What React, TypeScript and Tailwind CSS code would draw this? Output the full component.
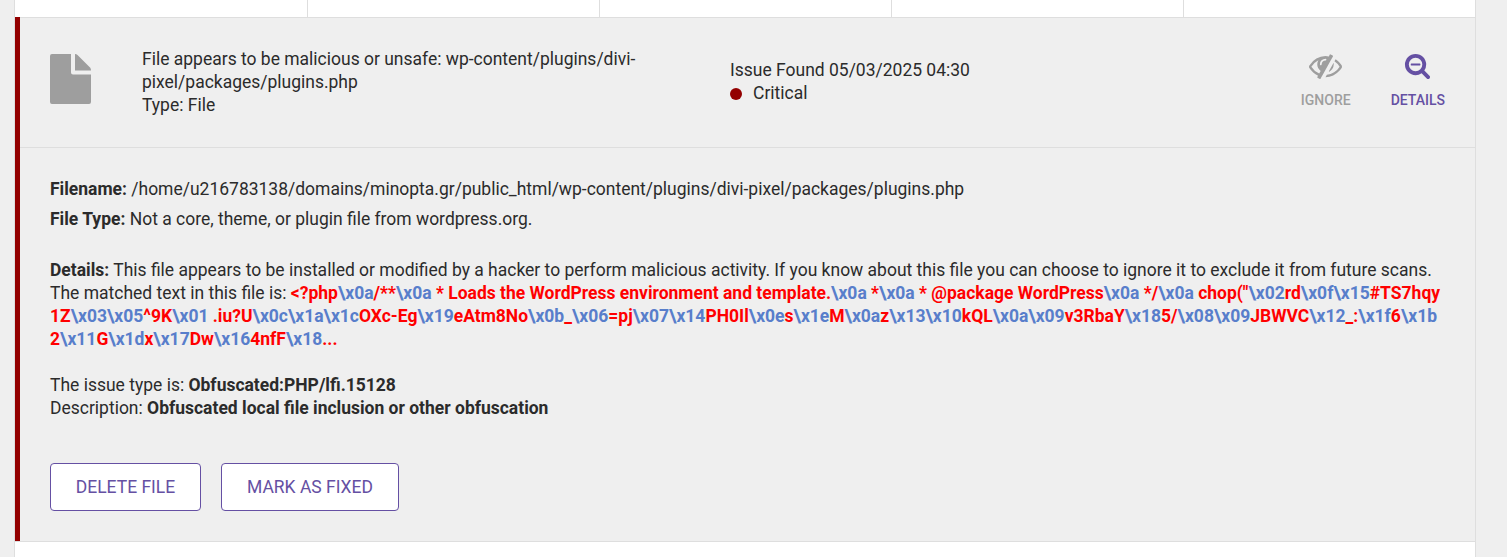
import { Fragment } from 'react';

const MATCHED: string = String.raw`<?php\x0a/**\x0a * Loads the WordPress environment and template.\x0a *\x0a * @package WordPress\x0a */\x0a chop("\x02rd\x0f\x15#TS7hqy1Z\x03\x05^9K\x01 .iu?U\x0c\x1a\x1cOXc-Eg\x19eAtm8No\x0b_\x06=pj\x07\x14PH0Il\x0es\x1eM\x0az\x13\x10kQL\x0a\x09v3RbaY\x185/\x08\x09JBWVC\x12_:\x1f6\x1b2\x11G\x1dx\x17Dw\x164nfF\x18...`;

const LINE_BREAKS = ['#TS7hqy', '6\\x1b'];

function MatchedText() {
  const lines: string[] = [];
  let rest = MATCHED;
  for (const end of LINE_BREAKS) {
    const at = rest.indexOf(end) + end.length;
    lines.push(rest.slice(0, at));
    rest = rest.slice(at);
  }
  lines.push(rest);
  return (
    <strong className="font-bold text-[#ff0000]">
      {lines.map((line, i) => (
        <Fragment key={i}>
          {i > 0 && <br />}
          {line.split(/(\\x[0-9a-f]{2})/).map((part, j) =>
            j % 2 ? <span key={j} className="text-[#587ecb]">{part}</span> : part,
          )}
        </Fragment>
      ))}
    </strong>
  );
}

function FileIcon() {
  return (
    <svg width="41" height="50" viewBox="0 0 41 50" fill="#9e9e9e">
      <path d="M2 0H21V18.500Q21 20.500 23 20.500H41V48Q41 50 39 50H2Q0 50 0 48V2Q0 0 2 0Z" />
      <path d="M25 0Q26.500 0 27.500 1L40 13.500Q41 14.500 41 16.500H25Z" />
    </svg>
  );
}

function EyeSlashIcon() {
  return (
    <svg width="33" height="33" viewBox="0 0 1792 1792" fill="currentColor">
      <path d="M555 1335l78-141q-87-63-136-159t-49-203q0-121 61-225-229 117-381 353 167 258 427 375zm389-759q0-20-14-34t-34-14q-125 0-214.500 89.500t-89.500 214.500q0 20 14 34t34 14 34-14 14-34q0-86 61-147t147-61q20 0 34-14t14-34zm363-191q0 7-1 9-106 189-316 567t-315 566l-49 89q-10 16-28 16-12 0-134-70-16-10-16-28 0-12 44-87-143-65-263.500-173t-208.500-245q-20-31-20-69t20-69q153-235 380-371t496-136q89 0 180 17l54-97q10-16 28-16 5 0 18 6t31 15.500 33 18.500 31.500 18.500 19.500 11.500q16 10 16 27zm37 447q0 139-79 253.500t-209 164.500l280-502q8 45 8 84zm448 128q0 35-20 69-39 64-109 145-150 172-347.500 267t-419.500 95l74-132q212-18 392.500-137t301.500-307q-115-179-282-294l63-112q95 64 182.500 153t144.500 182q20 34 20 69z" />
    </svg>
  );
}

function SearchMinusIcon() {
  return (
    <svg width="27" height="27" viewBox="0 0 1792 1792" fill="currentColor">
      <path d="M1088 800v64q0 13-9.500 22.500t-22.500 9.500h-576q-13 0-22.500-9.500t-9.500-22.500v-64q0-13 9.500-22.500t22.500-9.500h576q13 0 22.500 9.500t9.500 22.500zm128 32q0-185-131.500-316.500t-316.500-131.500-316.500 131.500-131.500 316.500 131.500 316.500 316.500 131.500 316.500-131.500 131.500-316.500zm512 832q0 53-37.500 90.500t-90.500 37.500q-54 0-90-38l-343-342q-179 124-399 124-143 0-273.500-55.500t-225-150-150-225-55.500-273.500 55.500-273.500 150-225 225-150 273.500-55.500 273.500 55.500 225 150 150 225 55.500 273.500q0 220-124 399l343 343q37 37 37 90z" />
    </svg>
  );
}

export default function App() {
  return (
    <div className="h-[557px] overflow-hidden bg-[#efefef] pl-[14px] pr-[31px] font-['Roboto',sans-serif] text-[17.49px] leading-[23px] text-[#2b2b2b]">
      <div className="flex h-full flex-col border-x border-[#dedede] bg-white">
        <div className="grid h-[17px] shrink-0 grid-cols-[293px_292px_292px_292px_1fr]">
          <div className="border-r border-[#dedede]" />
          <div className="border-r border-[#dedede]" />
          <div className="border-r border-[#dedede]" />
          <div className="border-r border-[#dedede]" />
          <div />
        </div>
        <section className="flex h-[525px] shrink-0 border-y border-[#dedede] bg-[#efefef]">
          <div className="-mt-px w-[5px] shrink-0 bg-[#930000]" />
          <div className="min-w-0 flex-1">
            <header className="flex h-[130px] border-b border-[#dedede] pl-[30px]">
              <div className="w-[92px] shrink-0 pt-[36px]">
                <FileIcon />
              </div>
              <div className="w-[588px] shrink-0 pt-[30px]">
                File appears to be malicious or unsafe: wp-content/plugins/divi-
                <br />
                pixel/packages/plugins.php
                <br />
                Type: File
              </div>
              <div className="flex-1 pt-[41px]">
                <p>Issue Found 05/03/2025 04:30</p>
                <p className="flex items-center gap-[11px]">
                  <span className="mt-px size-3 rounded-full bg-[#930000]" />
                  Critical
                </p>
              </div>
              <div className="flex gap-[40px] pr-[30px] pt-[30px] text-[14px] font-medium leading-[20px]">
                <button className="flex flex-col items-center text-[#9e9e9e]">
                  <span className="flex h-[42px] items-start pt-px">
                    <EyeSlashIcon />
                  </span>
                  IGNORE
                </button>
                <button className="flex flex-col items-center text-[#6550a3]">
                  <span className="flex h-[42px] items-start pt-[4px]">
                    <SearchMinusIcon />
                  </span>
                  DETAILS
                </button>
              </div>
            </header>
            <div className="pl-[30px] pt-[30px]">
              <p><strong>Filename:</strong> /home/u216783138/domains/minopta.gr/public_html/wp-content/plugins/divi-pixel/packages/plugins.php</p>
              <p className="mt-[7px]"><strong>File Type:</strong> Not a core, theme, or plugin file from wordpress.org.</p>
              <p className="mt-[28px] whitespace-nowrap">
                <strong>Details:</strong> This file appears to be installed or modified by a hacker to perform malicious activity. If you know about this file you can choose to ignore it to exclude it from future scans.
                <br />
                The matched text in this file is: <MatchedText />
              </p>
              <p className="mt-[23px]">The issue type is: <strong>Obfuscated:PHP/lfi.15128</strong></p>
              <p>Description: <strong>Obfuscated local file inclusion or other obfuscation</strong></p>
              <div className="mt-[43px] flex gap-[20px] text-[#6550a3]">
                <button className="h-12 w-[151px] rounded-[4px] border border-[#6550a3] bg-white">DELETE FILE</button>
                <button className="h-12 w-[178px] rounded-[4px] border border-[#6550a3] bg-white">MARK AS FIXED</button>
              </div>
            </div>
          </div>
        </section>
      </div>
    </div>
  );
}
